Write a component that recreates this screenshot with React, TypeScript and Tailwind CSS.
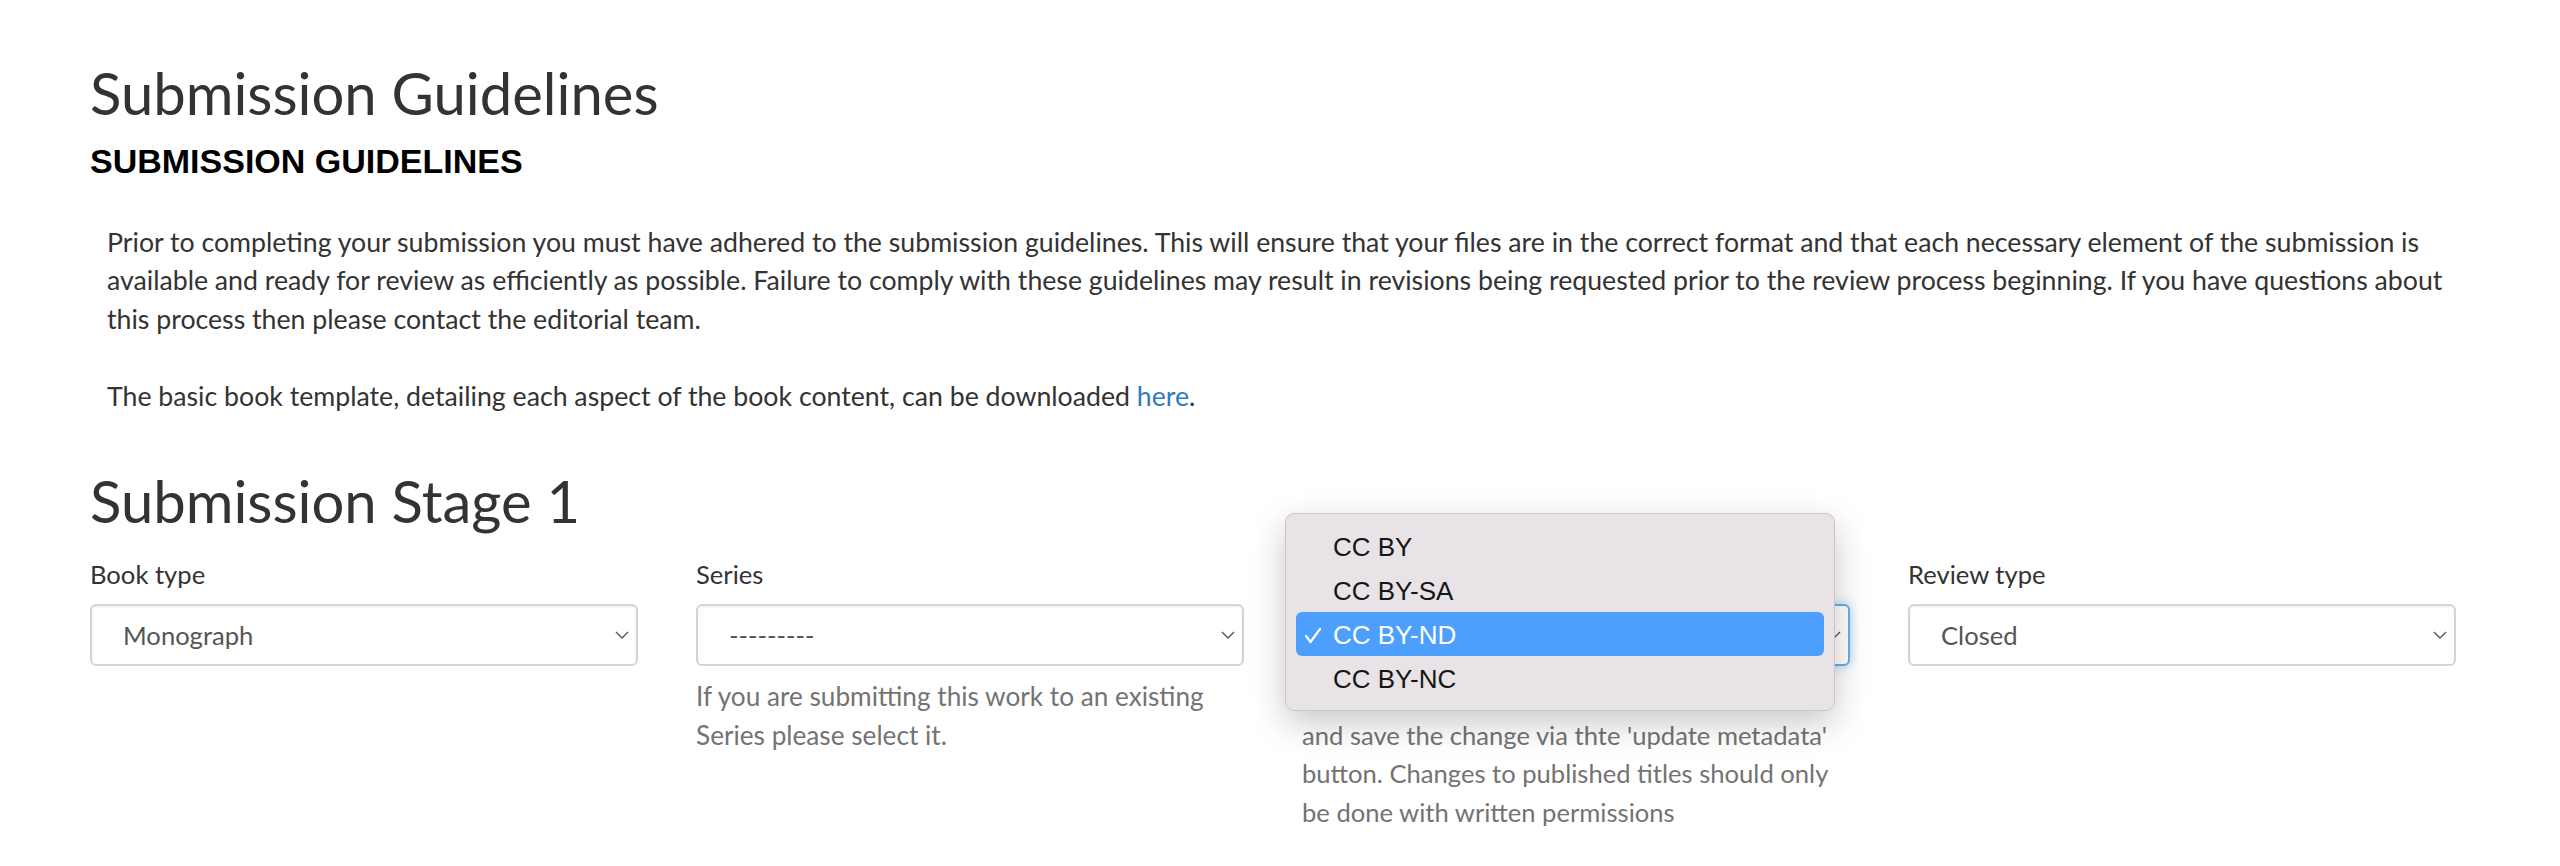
import React from "react";

interface SelectBoxProps {
    value: string;
    focused?: boolean;
}

/** Chevron used inside the fake select boxes. */
function Chevron() {
    return (
        <svg width="14" height="8" viewBox="0 0 14 8" fill="none" stroke="#555" strokeWidth="1.4" aria-hidden="true">
            <polyline points="1,1 7,7 13,1" />
        </svg>
    );
}

/** A closed select control, drawn as a box so it looks the same everywhere. */
function SelectBox({ value, focused }: SelectBoxProps) {
    return (
        <div
            className={
                focused
                    ? "flex h-[62px] items-center justify-between rounded-[6px] border-2 border-[#66afe9] bg-white pl-[31px] pr-[7px] text-[#555] shadow-[0_0_12px_rgba(102,175,233,0.6)]"
                    : "flex h-[62px] items-center justify-between rounded-[6px] border-2 border-[#d4d4d4] bg-white pl-[31px] pr-[7px] text-[#555] shadow-[inset_0_1px_2px_rgba(0,0,0,0.075)]"
            }
        >
            <span>{value}</span>
            <Chevron />
        </div>
    );
}

const licenses = ["CC BY", "CC BY-SA", "CC BY-ND", "CC BY-NC"];

/** The open native-style option list over the licence field. */
function LicenseMenu() {
    return (
        <div className="absolute left-[-17px] top-[-42px] z-10 w-[550px] rounded-[9px] border border-[#c9c5c8] bg-[#e8e3e6] px-[10px] py-[10px] font-['Liberation_Sans',Arial,sans-serif] text-[26px] text-[#161616] shadow-[0_12px_34px_rgba(0,0,0,0.22)]">
            {licenses.map((l) => {
                const selected = l === "CC BY-ND";
                return (
                    <div
                        key={l}
                        className={
                            selected
                                ? "flex h-[44px] items-center rounded-[6px] bg-[#4c9ffd] pl-[8px] pt-[2px] text-white"
                                : "flex h-[44px] items-center pl-[8px] pt-[2px]"
                        }
                    >
                        <span className="flex w-[29px] items-center">
                            {selected && (
                                <svg width="18" height="17" viewBox="0 0 18 17" fill="none" stroke="white" strokeWidth="2.2" strokeLinecap="round" strokeLinejoin="round" aria-hidden="true">
                                    <polyline points="2,9 6.5,15 16,2" />
                                </svg>
                            )}
                        </span>
                        <span>{l}</span>
                    </div>
                );
            })}
        </div>
    );
}

export default function App() {
    return (
        <div className="min-h-screen bg-white font-['Lato','Open_Sans',sans-serif] text-[25.6px] leading-[38.4px] text-[#333]">
            <div className="w-[2470px] pl-[90px] pt-[61px]">
                <h1 className="text-[58px] leading-[64px] font-normal">Submission Guidelines</h1>
                <h2 className="mt-[16px] font-['Liberation_Sans',Arial,sans-serif] text-[34px] leading-[40px] font-bold text-black">
                    SUBMISSION GUIDELINES
                </h2>

                <div className="mt-[42px] pl-[17px] text-[26.7px] whitespace-nowrap">
                    <p>
                        Prior to completing your submission you must have adhered to the submission guidelines. This will ensure that your files are in the correct format and that each necessary element of the submission is
                        <br />
                        available and ready for review as efficiently as possible. Failure to comply with these guidelines may result in revisions being requested prior to the review process beginning. If you have questions about
                        <br />
                        this process then please contact the editorial team.
                    </p>
                    <p className="mt-[38.4px]">
                        The basic book template, detailing each aspect of the book content, can be downloaded{" "}
                        <a href="#" className="text-[#337ab7]">here</a>.
                    </p>
                </div>

                <h1 className="mt-[54px] text-[58px] leading-[64px] font-normal">Submission Stage 1</h1>

                <div className="mt-[22px] grid w-[2366px] grid-cols-4 gap-x-[58px]">
                    <div>
                        <label className="block">Book type</label>
                        <div className="mt-[11px]">
                            <SelectBox value="Monograph" />
                        </div>
                    </div>

                    <div>
                        <label className="block">Series</label>
                        <div className="mt-[11px]">
                            <SelectBox value="---------" />
                        </div>
                        <p className="mt-[11px] whitespace-nowrap text-[26.2px] text-[#737373]">
                            If you are submitting this work to an existing
                            <br />
                            Series please select it.
                        </p>
                    </div>

                    <div className="relative">
                        <label className="block">License</label>
                        <div className="mt-[11px]">
                            <SelectBox value="CC BY-ND" focused />
                        </div>
                        <p className="mt-[11px] whitespace-nowrap text-[#737373]">
                            To change the license, select a new one
                            <br />
                            and save the change via thte 'update metadata'
                            <br />
                            button. Changes to published titles should only
                            <br />
                            be done with written permissions
                        </p>
                        <LicenseMenu />
                    </div>

                    <div>
                        <label className="block">Review type</label>
                        <div className="mt-[11px]">
                            <SelectBox value="Closed" />
                        </div>
                    </div>
                </div>
            </div>
        </div>
    );
}
